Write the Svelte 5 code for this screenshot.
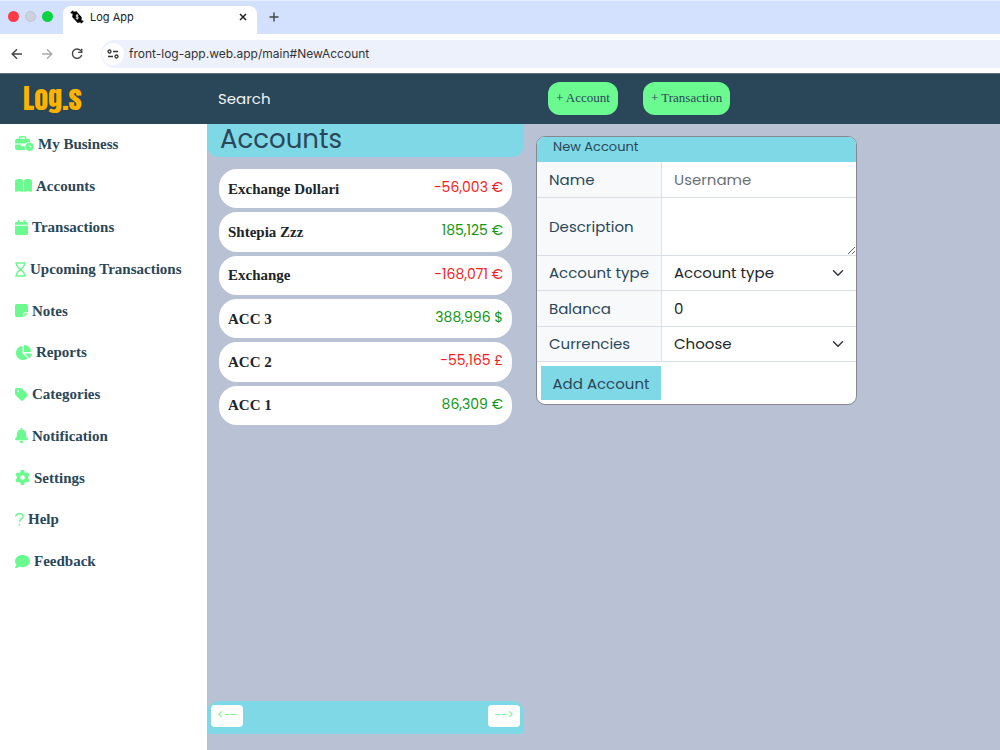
<script>
  const menu = [
    { label: 'My Business', w: 19, box: '0 0 640 512', d: 'M184 48H328c4.4 0 8 3.6 8 8V96H176V56c0-4.4 3.6-8 8-8zm-56 8V96H64C28.7 96 0 124.7 0 160v96H192 352h8.2c32.3-39.1 81.1-64 135.8-64c5.4 0 10.7 .2 16 .7V160c0-35.3-28.7-64-64-64H384V56c0-30.9-25.1-56-56-56H184c-30.9 0-56 25.1-56 56zM320 352H224c-17.7 0-32-14.3-32-32V288H0V416c0 35.3 28.7 64 64 64H360.2C335.1 449.6 320 410.5 320 368c0-5.4 .2-10.7 .7-16l-.7 0zm320 16a144 144 0 1 0 -288 0 144 144 0 1 0 288 0zM496 288c8.8 0 16 7.2 16 16v48h32c8.8 0 16 7.2 16 16s-7.2 16-16 16H496c-8.8 0-16-7.2-16-16V304c0-8.8 7.2-16 16-16z' },
    { label: 'Accounts', w: 17, box: '0 0 576 512', d: 'M249.6 471.5c10.8 3.8 22.4-4.1 22.4-15.5V78.6c0-4.2-1.6-8.4-5-11C247.4 52 202.4 32 144 32C93.5 32 46.3 45.3 18.1 56.1C6.8 60.5 0 71.7 0 83.8V454.1c0 11.9 12.8 20.2 24.1 16.5C55.6 460.1 105.5 448 144 448c33.9 0 79 14 105.6 23.5zm76.8 0C353 462 398.1 448 432 448c38.5 0 88.4 12.1 119.9 22.6c11.3 3.8 24.1-4.6 24.1-16.5V83.8c0-12.1-6.8-23.3-18.1-27.6C529.7 45.3 482.5 32 432 32c-58.4 0-103.4 20-123 35.6c-3.3 2.6-5 6.8-5 11V456c0 11.4 11.7 19.3 22.4 15.5z' },
    { label: 'Transactions', w: 13, box: '0 0 448 512', d: 'M96 32V64H48C21.5 64 0 85.5 0 112v48H448V112c0-26.5-21.5-48-48-48H352V32c0-17.7-14.3-32-32-32s-32 14.3-32 32V64H160V32c0-17.7-14.3-32-32-32S96 14.3 96 32zM448 192H0V464c0 26.5 21.5 48 48 48H400c26.5 0 48-21.5 48-48V192z' },
    { label: 'Upcoming Transactions', w: 11, box: '0 0 384 512', line: true, d: 'M10 26H374M10 486H374M56 24V67C56 112 68 140 96 168L184 256L96 344C68 372 56 400 56 445V488M328 24V67C328 112 316 140 288 168L200 256L288 344C316 372 328 400 328 445V488' },
    { label: 'Notes', w: 13, box: '0 0 448 512', d: 'M64 32C28.7 32 0 60.7 0 96V416c0 35.3 28.7 64 64 64H288V368c0-26.5 21.5-48 48-48H448V96c0-35.3-28.7-64-64-64H64zM448 352H402.7 336c-8.8 0-16 7.2-16 16v66.7V480l32-32 64-64 32-32z' },
    { label: 'Reports', w: 17, box: '0 0 576 512', d: 'M304 240V16.6c0-9 7-16.6 16-16.6C443.7 0 544 100.3 544 224c0 9-7.6 16-16.6 16H304zM32 272C32 150.7 122.1 50.3 239 34.3c9.2-1.3 17 6.1 17 15.4V288L412.5 444.5c6.7 6.7 6.2 17.7-1.5 23.1C371.8 495.6 323.8 512 272 512C139.5 512 32 404.6 32 272zm526.4 16c9.3 0 16.6 7.8 15.4 17c-7.7 55.9-34.6 105.6-73.9 142.3c-6 5.6-15.4 5.2-21.2-.7L320 288H558.4z' },
    { label: 'Categories', w: 13, box: '0 0 448 512', d: 'M0 80V229.5c0 17 6.7 33.3 18.7 45.3l176 176c25 25 65.5 25 90.5 0L418.7 317.3c25-25 25-65.5 0-90.5l-176-176c-12-12-28.3-18.7-45.3-18.7H48C21.5 32 0 53.5 0 80zm112 32a32 32 0 1 1 0 64 32 32 0 1 1 0-64z' },
    { label: 'Notification', w: 13, box: '0 0 448 512', d: 'M224 0c-17.7 0-32 14.3-32 32V51.2C119 66 64 130.6 64 208v18.8c0 47-17.3 92.4-48.5 127.6l-7.4 8.3c-8.4 9.4-10.4 22.9-5.3 34.4S19.4 416 32 416H416c12.6 0 24-7.4 29.2-18.9s3.1-25-5.3-34.4l-7.4-8.3C401.3 319.2 384 273.9 384 226.8V208c0-77.4-55-142-128-156.8V32c0-17.7-14.3-32-32-32zm45.3 493.3c12-12 18.7-28.3 18.7-45.3H224 160c0 17 6.7 33.3 18.7 45.3s28.3 18.7 45.3 18.7s33.3-6.7 45.3-18.7z' },
    { label: 'Settings', w: 15, box: '0 0 512 512', d: 'M495.9 166.6c3.2 8.7 .5 18.4-6.4 24.6l-43.3 39.4c1.1 8.3 1.7 16.8 1.7 25.4s-.6 17.1-1.7 25.4l43.3 39.4c6.9 6.2 9.6 15.9 6.4 24.6c-4.4 11.9-9.7 23.3-15.8 34.3l-4.7 8.1c-6.6 11-14 21.4-22.1 31.2c-5.9 7.2-15.7 9.6-24.5 6.8l-55.7-17.7c-13.4 10.3-28.2 18.9-44 25.4l-12.5 57.1c-2 9.1-9 16.3-18.2 17.8c-13.8 2.3-28 3.5-42.5 3.5s-28.7-1.2-42.5-3.5c-9.2-1.5-16.2-8.7-18.2-17.8l-12.5-57.1c-15.8-6.5-30.6-15.1-44-25.4L83.1 425.9c-8.8 2.8-18.6 .3-24.5-6.8c-8.1-9.8-15.5-20.2-22.1-31.2l-4.7-8.1c-6.1-11-11.4-22.4-15.8-34.3c-3.2-8.7-.5-18.4 6.4-24.6l43.3-39.4C64.6 273.1 64 264.6 64 256s.6-17.1 1.7-25.4L22.4 191.2c-6.9-6.2-9.6-15.9-6.4-24.6c4.4-11.9 9.7-23.3 15.8-34.3l4.7-8.1c6.6-11 14-21.4 22.1-31.2c5.9-7.2 15.7-9.6 24.5-6.8l55.7 17.7c13.4-10.3 28.2-18.9 44-25.4l12.5-57.1c2-9.1 9-16.3 18.2-17.8C227.3 1.2 241.5 0 256 0s28.7 1.2 42.5 3.5c9.2 1.5 16.2 8.7 18.2 17.8l12.5 57.1c15.8 6.5 30.6 15.1 44 25.4l55.7-17.7c8.8-2.8 18.6-.3 24.5 6.8c8.1 9.8 15.5 20.2 22.1 31.2l4.7 8.1c6.1 11 11.4 22.4 15.8 34.3zM256 336a80 80 0 1 0 0-160 80 80 0 1 0 0 160z' },
    { label: 'Help', w: 9, box: '0 0 320 512', line: true, d: 'M30 150C30 90 70 50 130 50H185C245 50 288 95 288 150C288 195 262 218 225 238C180 262 158 280 158 345M158 410V470' },
    { label: 'Feedback', w: 15, box: '0 0 512 512', d: 'M512 240c0 114.9-114.6 208-256 208c-37.1 0-72.3-6.4-104.1-17.9c-11.9 8.7-31.3 20.6-54.3 30.6C73.6 471.1 44.7 480 16 480c-6.5 0-12.3-3.9-14.8-9.9c-2.5-6-1.1-12.8 3.4-17.4l.3-.3c.3-.3 .7-.7 1.3-1.4c1.1-1.2 2.8-3.1 4.9-5.7c4.1-5 9.6-12.4 15.2-21.6c10-16.6 19.5-38.4 21.4-62.9C17.7 326.8 0 285.1 0 240C0 125.1 114.6 32 256 32s256 93.1 256 208z' },
  ];

  const accounts = [
    { name: 'Exchange Dollari', amount: '-56,003 €' },
    { name: 'Shtepia Zzz', amount: '185,125 €' },
    { name: 'Exchange', amount: '-168,071 €' },
    { name: 'ACC 3', amount: '388,996 $' },
    { name: 'ACC 2', amount: '-55,165 £' },
    { name: 'ACC 1', amount: '86,309 €' },
  ];
</script>

<div class="window">
  <div class="tabs">
    <div class="lights"><i class="red"></i><i class="grey"></i><i class="green"></i></div>
    <div class="tab">
      <svg width="14" height="14" viewBox="0 0 14 14" aria-hidden="true">
        <path d="M.5 2.200 3.200.3v1.300h4L5 3.200 2.600 4.600V3.500H.9zM13.500 11.800l-2.700 1.900v-1.300h-4L9 10.800l2.400-1.400v1.100h1.700z" />
        <path d="M3.400 3.300 6.500 2l4.800 5.300-.6 3.700-3.200 1.200L2.700 7z" stroke="#000" stroke-linejoin="round" />
        <path d="M8.400 5.600C7.700 4.700 5.900 4.900 6 6s2.400.6 2.400 1.800c0 1.100-1.700 1.200-2.600.4M7.100 4.300v5.200" fill="none" stroke="#fff" stroke-width="0.9" />
      </svg>
      <span>Log App</span>
      <button aria-label="Close tab"><svg width="8" height="8" viewBox="0 0 8 8"><path d="M1 1l6 6M7 1 1 7" stroke="#222" stroke-width="1.5" /></svg></button>
    </div>
    <button class="plus" aria-label="New tab"><svg width="10" height="10" viewBox="0 0 10 10"><path d="M5 .5v9M.5 5h9" stroke="#444" stroke-width="1.4" /></svg></button>
  </div>
  <div class="toolbar">
    <button aria-label="Back"><svg width="12" height="12" viewBox="0 0 12 12"><path d="M11 6H1.500M6 1.200 1.200 6 6 10.800" fill="none" stroke="#444" stroke-width="1.400" /></svg></button>
    <button aria-label="Forward"><svg width="12" height="12" viewBox="0 0 12 12"><path d="M1 6h9.500M6 1.200 10.800 6 6 10.800" fill="none" stroke="#aaa" stroke-width="1.400" /></svg></button>
    <button aria-label="Reload"><svg width="12" height="12" viewBox="0 0 12 12"><path d="M10 3A4.700 4.700 0 1 0 10.700 6.800M10.700.8v3.600H7.100" fill="none" stroke="#444" stroke-width="1.400" /></svg></button>
    <div class="url">
      <span class="site"><svg width="12" height="10" viewBox="0 0 12 10" fill="none" stroke="#333" stroke-width="1.300"><circle cx="2.500" cy="2.500" r="1.500" /><path d="M6 2.500h5M1 7.500h5" /><circle cx="9.500" cy="7.500" r="1.500" /></svg></span>
      <input aria-label="Address" value="front-log-app.web.app/main#NewAccount" />
    </div>
  </div>

  <header>
    <a class="logo" href="#home">Log.s</a>
    <input class="search" type="text" placeholder="Search" aria-label="Search" />
    <div class="actions">
      <button>+ Account</button>
      <button>+ Transaction</button>
    </div>
  </header>

  <div class="body">
    <nav>
      {#each menu as item}
        <a href="#{item.label}">
          <svg width={item.w} height="15" viewBox={item.box} class:line={item.line} aria-hidden="true"><path d={item.d} /></svg>
          <span>{item.label}</span>
        </a>
      {/each}
    </nav>

    <main>
      <section class="accounts">
        <h1>Accounts</h1>
        <ul>
          {#each accounts as a}
            <li><b>{a.name}</b><span class:neg={a.amount.startsWith('-')}>{a.amount}</span></li>
          {/each}
        </ul>
        <footer>
          <button>&lt;--</button>
          <button>--&gt;</button>
        </footer>
      </section>

      <form>
        <h2>New Account</h2>
        <div class="rows">
          <div class="row"><label for="name">Name</label><input id="name" placeholder="Username" /></div>
          <div class="row"><label for="desc">Description</label><textarea id="desc"></textarea></div>
          <div class="row"><label for="type">Account type</label><select id="type"><option>Account type</option></select></div>
          <div class="row"><label for="bal">Balanca</label><input id="bal" value="0" /></div>
          <div class="row"><label for="cur">Currencies</label><select id="cur"><option>Choose</option></select></div>
        </div>
        <div class="submit"><button type="button">Add Account</button></div>
      </form>
    </main>
  </div>
</div>

<style>
  :global(body) { margin: 0; background: #fff; }
  .window, .window :is(input, select, textarea, button) { font-family: Poppins, Inter, sans-serif; }
  .window :is(input, select, textarea, button) { box-sizing: border-box; border: 0; margin: 0; }
  .window { min-height: 100vh; display: flex; flex-direction: column; color: #2a4759; }
  svg { display: block; flex: none; }

  .tabs { display: flex; height: 34px; background: #d3e1fe; border-top: 1px solid #e6eefc; box-sizing: border-box; }
  .lights { display: flex; gap: 6px; padding: 10px 10px 0 8px; }
  .lights i { width: 11px; height: 11px; border-radius: 50%; box-sizing: border-box; }
  .red { background: #ff3b47; }
  .grey { background: #cdd2df; border: 1px solid #bcc3d3; }
  .green { background: #0bd33f; }
  .tab { display: flex; align-items: center; gap: 6px; width: 194px; margin-top: 5px; padding: 0 10px 6px 7px; box-sizing: border-box; background: #fff; border-radius: 8px 8px 0 0; font: 11px/16px Inter, sans-serif; color: #222; }
  .tab button, .plus, .toolbar button { padding: 0; background: none; display: grid; place-items: center; }
  .tab button { margin-left: auto; }
  .plus { padding: 0 12px 2px; }
  .toolbar { display: flex; align-items: center; height: 39px; padding-left: 11px; gap: 18px; background: #fff; }
  .url { flex: 1; display: flex; align-items: center; height: 28px; padding-left: 1px; gap: 5px; background: #edf1fb; border-radius: 14px 0 0 14px; }
  .site { width: 22px; height: 22px; border-radius: 50%; background: #fff; display: grid; place-items: center; }
  .url input { flex: 1; padding: 0; background: none; font: 12px/16px Inter, sans-serif; color: #333; }

  header { display: flex; align-items: center; height: 51px; padding-bottom: 2px; background: #2a4759; border-top: 1px solid #60747f; box-sizing: border-box; }
  .logo { width: 207px; padding-left: 23px; box-sizing: border-box; font: 400 28px/40px Anton, "Liberation Sans Narrow", sans-serif; color: #ffb300; text-decoration: none; }
  .search { width: 341px; padding: 0 11px; background: none; font-size: 15px; color: #fff; }
  .search::placeholder { color: #f1f4f5; opacity: 1; }
  .actions { display: flex; gap: 25px; }
  .actions button { height: 33px; padding: 0 8px; border-radius: 12px; background: #6bfa90; color: #2a4759; font: 13px "Liberation Serif", serif; }

  .body { flex: 1; display: flex; }
  nav { flex: none; width: 207px; height: 459px; box-sizing: border-box; padding-left: 15px; display: grid; grid-template-rows: repeat(11, 1fr); }
  nav a { display: flex; align-items: center; gap: 4px; padding-bottom: 2px; color: #2a4759; text-decoration: none; font: 700 15px/20px "Liberation Serif", serif; }
  nav svg { fill: #6bfa90; }
  nav svg.line { fill: none; stroke: #6bfa90; stroke-width: 52; }

  main { flex: 1; display: flex; align-items: flex-start; background: #b9c2d5; }
  .accounts { flex: 0 1 317px; align-self: stretch; display: flex; flex-direction: column; padding-bottom: 16px; }
  h1 { margin: 0; padding: 0 13px 3px; font-size: 26px; line-height: 30px; font-weight: 400; background: #7ed8e5; border-radius: 0 0 12px 12px; }
  ul { list-style: none; margin: 12px 12px auto; padding: 0; display: grid; grid-auto-rows: 1fr; gap: 4px; height: 256px; }
  li { display: flex; justify-content: space-between; padding: 0 9px; background: #fff; border-radius: 18px; }
  li b { align-self: center; font: 700 15px/20px "Liberation Serif", serif; color: #212529; }
  li span { padding-top: 8px; font-size: 14px; line-height: 20px; color: #109610; }
  li .neg { color: #fb1a1a; }
  footer { display: flex; justify-content: space-between; padding: 4px 4px 7px; background: #7ed8e5; border-radius: 12px 12px 0 0; }
  footer button { width: 32px; height: 22px; padding: 0 0 2px; border-radius: 4px; background: #fff; color: #6bfa90; font: 12px "DejaVu Sans Mono", monospace; }

  form { flex: 0 1 321px; margin: 12px 0 0 12px; box-sizing: border-box; border: 1px solid #85898f; border-radius: 9px; overflow: hidden; background: #fff; }
  h2 { margin: 0; padding: 0 16px 6px; font-size: 13px; line-height: 19px; font-weight: 400; background: #7ed8e5; }
  .rows { display: grid; grid-template-rows: 1fr 58px 1fr 1fr 1fr; height: 200px; }
  .row { display: grid; grid-template-columns: 125px 1fr; border-bottom: 1px solid #d9dee6; font-size: 15px; }
  .row label { display: flex; align-items: center; padding-left: 12px; background: #f8f9fb; border-right: 1px solid #dee2e6; box-sizing: border-box; }
  .row :is(input, select, textarea) { width: 100%; height: 100%; padding: 0 12px; font-size: 15px; background: #fff; color: #212529; border-radius: 0; }
  .row input::placeholder { color: #6b7075; opacity: 1; }
  .row select { appearance: none; background: #fff url("data:image/svg+xml,%3Csvg xmlns='http://www.w3.org/2000/svg' viewBox='0 0 16 16'%3E%3Cpath fill='none' stroke='%23343a40' stroke-linecap='round' stroke-linejoin='round' stroke-width='2' d='m2 5 6 6 6-6'/%3E%3C/svg%3E") no-repeat right 12px center / 12px 12px; }
  .submit { padding: 4px; }
  .submit button { height: 34px; width: 120px; padding: 0; background: #7ed8e5; color: #2a4759; font-size: 15px; }
</style>
